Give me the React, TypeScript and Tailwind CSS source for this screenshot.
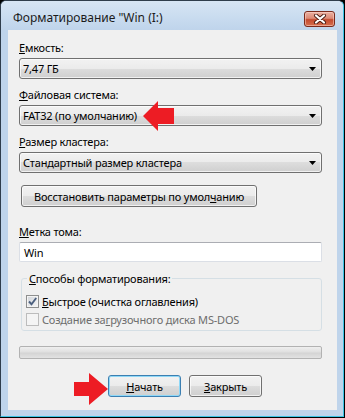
import React from "react";

const btnBg =
  "bg-[linear-gradient(180deg,#f2f2f2_0%,#ebebeb_50%,#dddddd_50%,#cfcfcf_100%)]";

function Label({ children }: { children: React.ReactNode }) {
  return <div className="leading-[15px] h-[15px]">{children}</div>;
}

function Combo({ value }: { value: string }) {
  return (
    <div
      className={`mt-[3px] h-[21px] flex items-center justify-between rounded-[3px] border border-[#707070] ${btnBg} shadow-[inset_0_0_0_1px_rgba(255,255,255,0.7)] pl-[3px] pr-[5px]`}
    >
      <span className="leading-[15px]">{value}</span>
      <svg width="7" height="4" viewBox="0 0 7 4">
        <path d="M0 0H7L3.5 4Z" fill="#000" />
      </svg>
    </div>
  );
}

function Check({ checked, disabled }: { checked?: boolean; disabled?: boolean }) {
  return (
    <div
      className={
        disabled
          ? "w-[13px] h-[13px] shrink-0 border border-[#bcbcbc] bg-[#f4f4f4]"
          : "w-[13px] h-[13px] shrink-0 border border-[#8e8f8f] bg-[linear-gradient(135deg,#d0d4d9,#f7f7f7)] shadow-[inset_0_0_0_1px_#f4f4f4] flex items-center justify-center"
      }
    >
      {checked && (
        <svg width="11" height="11" viewBox="0 0 11 11">
          <path
            d="M2 5.5L4.5 8.2L9.2 2"
            fill="none"
            stroke="#4c607f"
            strokeWidth="1.9"
          />
        </svg>
      )}
    </div>
  );
}

function Button({
  children,
  primary,
  className = "",
}: {
  children: React.ReactNode;
  primary?: boolean;
  className?: string;
}) {
  return (
    <div
      className={`h-[22px] flex items-center justify-center rounded-[3px] border ${btnBg} ${
        primary
          ? "border-[#3c7fb1] shadow-[inset_0_0_0_1px_#8fd8f7]"
          : "border-[#707070] shadow-[inset_0_0_0_1px_rgba(255,255,255,0.7)]"
      } ${className}`}
    >
      <span className="leading-[15px]">{children}</span>
    </div>
  );
}

export default function App() {
  return (
    <div className="relative w-[345px] h-[418px] bg-black font-['Segoe_UI','Noto_Sans',sans-serif] text-[11px] text-black tracking-[-0.2px]">
      <div className="w-[344px] h-[417px] flex flex-col rounded-t-[6px] border border-[#2f3d4c] border-r-[#3cc3e4] border-b-[#3cc3e4] bg-[#bfd4eb] overflow-hidden">
        {/* заголовок */}
        <div className="h-[29px] shrink-0 flex items-start justify-between pl-[12px] pr-[8px] bg-[linear-gradient(180deg,#d7e5f4_0%,#c8dbef_60%,#bfd4eb_100%)]">
          <div className="mt-[9px] leading-[15px] text-[12px] tracking-[0px] text-[#1b1b1b]">
            {'Форматирование "Win (I:)'}
          </div>
          <div className="mt-[10px] w-[31px] h-[16px] flex items-center justify-center rounded-[3px] border border-[#7a2a1c] bg-[linear-gradient(180deg,#eab0a2_0%,#dc8a76_45%,#c44a2e_55%,#d6704f_100%)] shadow-[inset_0_0_0_1px_rgba(255,220,210,0.5)]">
            <svg width="14" height="10" viewBox="0 0 14 10">
              <path
                d="M3 1.5L11 8.5M11 1.5L3 8.5"
                stroke="#4a1b12"
                strokeWidth="4"
                strokeLinecap="round"
              />
              <path
                d="M3 1.5L11 8.5M11 1.5L3 8.5"
                stroke="#fff"
                strokeWidth="2.2"
                strokeLinecap="round"
              />
            </svg>
          </div>
        </div>

        {/* содержимое окна */}
        <div className="ml-[7px] w-[329px] h-[380px] shrink-0 bg-[#f0f0f0] pl-[11px] pr-[15px] pt-[10px]">
          <Label>
            <span className="underline">Е</span>мкость:
          </Label>
          <Combo value="7,47 ГБ" />

          <div className="mt-[8px]">
            <Label>
              <span className="underline">Ф</span>айловая система:
            </Label>
          </div>
          <Combo value="FAT32 (по умолчанию)" />

          <div className="mt-[8px]">
            <Label>
              <span className="underline">Р</span>азмер кластера:
            </Label>
          </div>
          <Combo value="Стандартный размер кластера" />

          <Button className="mt-[12px] ml-[2px] w-[236px]">
            Восстановить параметры по умол<span className="underline">ч</span>анию
          </Button>

          <div className="mt-[17px]">
            <Label>
              <span className="underline">М</span>етка тома:
            </Label>
          </div>
          <div className="mt-[3px] h-[20px] flex items-center rounded-[2px] border border-[#dbdfe6] border-t-[#abadb3] bg-white pl-[4px]">
            <span className="leading-[15px]">Win</span>
          </div>

          <fieldset className="mt-[9px] ml-[2px] w-[301px] rounded-[3px] border border-[#d5dfe5] px-[4px] pt-[9px] pb-[4px]">
            <legend className="ml-[1px] px-[2px] leading-[15px]">
              <span className="underline">С</span>пособы форматирования:
            </legend>
            <div className="flex items-center gap-[3px] h-[13px]">
              <Check checked />
              <span className="leading-[15px]">
                <span className="underline">Б</span>ыстрое (очистка оглавления)
              </span>
            </div>
            <div className="mt-[5px] flex items-center gap-[3px] h-[13px] text-[#6d6d6d]">
              <Check disabled />
              <span className="leading-[15px]">
                Создание за<span className="underline">г</span>рузочного диска MS-DOS
              </span>
            </div>
          </fieldset>

          <div className="mt-[15px] h-[13px] rounded-[2px] border border-[#b2b2b2] bg-[linear-gradient(180deg,#efefef_0%,#e0e0e0_45%,#d4d4d4_55%,#e2e2e2_100%)]" />

          <div className="mt-[16px] ml-[89px] flex gap-[8px]">
            <Button primary className="w-[73px]">
              <span className="underline">Н</span>ачать
            </Button>
            <Button className="w-[73px]">
              <span className="underline">З</span>акрыть
            </Button>
          </div>
        </div>
      </div>

      {/* красные стрелки */}
      <svg
        className="absolute left-0 top-0 pointer-events-none"
        width="345"
        height="418"
        viewBox="0 0 345 418"
      >
        <polygon
          points="143,116 158,101 158,108 174,108 174,124 158,124 158,131"
          fill="#ed1c24"
        />
        <polygon
          points="108,389 89,373 89,382 74,382 74,396 89,396 89,405"
          fill="#ed1c24"
        />
      </svg>
    </div>
  );
}
